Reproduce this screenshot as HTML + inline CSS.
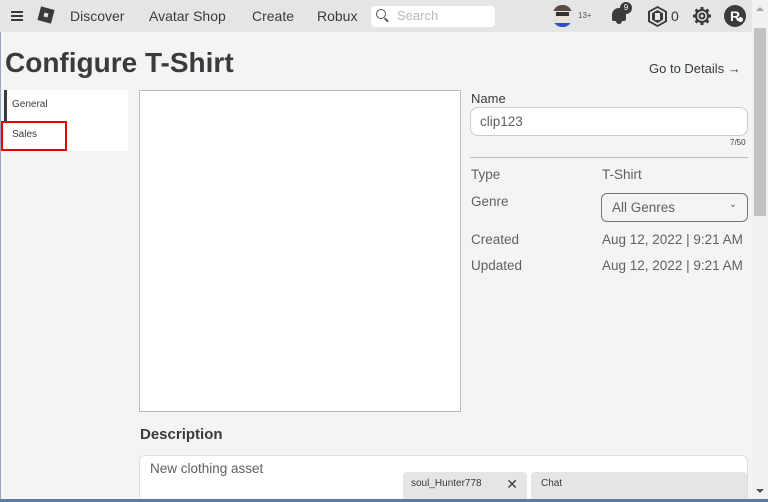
<!DOCTYPE html>
<html><head><style>
*{box-sizing:border-box;margin:0;padding:0}
body{width:768px;height:502px;overflow:hidden;background:#f2f4f5;font-family:"Liberation Sans",sans-serif;color:#393b3d;position:relative}
.abs{position:absolute}
.hdr{left:0;top:0;width:752px;height:32px;background:#e3e5e7}
.nav{top:8px;font-size:14px;color:#393b3d}
.t{font-size:13.5px;color:#606162}
</style></head><body>
<div class="abs" style="left:0;top:0;width:1px;height:502px;background:#9aa6b8"></div>
<div class="abs hdr"></div>
<div class="abs" style="left:11px;top:11px;width:12px;height:2px;background:#393b3d;box-shadow:0 4px 0 #393b3d,0 8px 0 #393b3d"></div>
<div class="abs" style="left:39px;top:8px;width:14px;height:14px;background:#393b3d;transform:rotate(15deg)"><div style="margin:5px;width:4px;height:4px;background:#e3e5e7"></div></div>
<div class="abs nav" style="left:70px">Discover</div>
<div class="abs nav" style="left:149px">Avatar Shop</div>
<div class="abs nav" style="left:252px">Create</div>
<div class="abs nav" style="left:317px">Robux</div>
<div class="abs" style="left:371px;top:6px;width:124px;height:21px;background:#fff;border-radius:4px"></div>
<div class="abs" style="left:376px;top:9px;width:10px;height:10px;border:1.5px solid #555;border-radius:50%"></div>
<div class="abs" style="left:384px;top:19px;width:5px;height:1.5px;background:#555;transform:rotate(45deg)"></div>
<div class="abs" style="left:397px;top:8px;font-size:13px;color:#b8b8b8">Search</div>
<div class="abs" style="left:553px;top:5px;width:19px;height:22px;border-radius:9px;background:#e8e0da;overflow:hidden">
 <div style="height:6px;background:#5a4a45"></div>
 <div style="margin:1px 3px;height:4px;background:#333"></div>
 <div style="position:absolute;bottom:0;left:0;width:19px;height:4px;background:#2a4dc8"></div></div>
<div class="abs" style="left:578px;top:11px;font-size:8px;color:#555">13+</div>
<div class="abs" style="left:612px;top:8px;width:14px;height:13px;background:#393b3d;border-radius:7px 7px 2px 2px"></div>
<div class="abs" style="left:616px;top:20px;width:6px;height:4px;background:#393b3d;border-radius:0 0 3px 3px"></div>
<div class="abs" style="left:620px;top:2px;width:12px;height:12px;border-radius:50%;background:#393b3d;color:#fff;font-size:8px;text-align:center;line-height:12px">9</div>
<div class="abs" style="left:648px;top:6px;width:19px;height:21px;background:#393b3d;clip-path:polygon(50% 0,100% 25%,100% 75%,50% 100%,0 75%,0 25%)"></div>
<div class="abs" style="left:650px;top:8px;width:15px;height:17px;background:#e3e5e7;clip-path:polygon(50% 0,100% 25%,100% 75%,50% 100%,0 75%,0 25%)"></div>
<div class="abs" style="left:652px;top:10px;width:11px;height:13px;background:#393b3d;clip-path:polygon(50% 0,100% 25%,100% 75%,50% 100%,0 75%,0 25%)"></div>
<div class="abs" style="left:655px;top:13px;width:5px;height:7px;background:#e3e5e7"></div>
<div class="abs" style="left:671px;top:8px;font-size:14px">0</div>
<svg class="abs" style="left:692px;top:6px" width="20" height="20" viewBox="0 0 20 20"><g fill="none" stroke="#393b3d" stroke-width="2"><circle cx="10" cy="10" r="6"/><circle cx="10" cy="10" r="2.5"/></g><g stroke="#393b3d" stroke-width="3"><path d="M10 1v3M10 16v3M1 10h3M16 10h3M3.6 3.6l2.1 2.1M14.3 14.3l2.1 2.1M3.6 16.4l2.1-2.1M14.3 5.7l2.1-2.1"/></g></svg>
<div class="abs" style="left:724px;top:5px;width:22px;height:22px;border-radius:50%;background:#393b3d;color:#fff;font-weight:bold;font-size:14px;text-align:center;line-height:22px">R</div>
<div class="abs" style="left:738px;top:17px;width:5px;height:5px;border-radius:50%;background:#fff"></div>
<div class="abs" style="left:752px;top:0;width:16px;height:502px;background:#f1f1f1"></div>
<div class="abs" style="left:756px;top:7px;width:0;height:0;border:4px solid transparent;border-bottom-color:#a3a3a3;border-top:0"></div>
<div class="abs" style="left:754px;top:28px;width:12px;height:188px;background:#c1c1c1"></div>
<div class="abs" style="left:756px;top:489px;width:0;height:0;border:4px solid transparent;border-top-color:#505050;border-bottom:0"></div>
<div class="abs" style="left:5px;top:47px;font-size:28px;font-weight:bold;color:#393b3d">Configure T-Shirt</div>
<div class="abs" style="left:649px;top:61px;font-size:13px">Go to Details →</div>
<div class="abs" style="left:4px;top:90px;width:124px;height:61px;background:#fff"></div>
<div class="abs" style="left:4px;top:90px;width:3px;height:31px;background:#393b3d"></div>
<div class="abs" style="left:12px;top:99px;font-size:10px">General</div>
<div class="abs" style="left:1px;top:121px;width:66px;height:30px;border:2px solid #e00"></div>
<div class="abs" style="left:12px;top:129px;font-size:10px">Sales</div>
<div class="abs" style="left:139px;top:90px;width:322px;height:322px;background:#fff;border:1px solid #bbb"></div>
<div class="abs" style="left:471px;top:91px;font-size:13px">Name</div>
<div class="abs" style="left:470px;top:107px;width:278px;height:29px;background:#fff;border:1px solid #ccc;border-radius:8px;padding:6px 9px;font-size:13.5px;color:#606162">clip123</div>
<div class="abs" style="left:730px;top:138px;font-size:8px">7/50</div>
<div class="abs" style="left:470px;top:157px;width:278px;height:1px;background:#bbb"></div>
<div class="abs t" style="left:471px;top:167px">Type</div>
<div class="abs t" style="left:602px;top:167px">T-Shirt</div>
<div class="abs t" style="left:471px;top:194px">Genre</div>
<div class="abs" style="left:601px;top:193px;width:147px;height:29px;border:1px solid #777;border-radius:6px;padding:6px 10px;font-size:13.5px;color:#606162">All Genres<span style="position:absolute;right:10px;top:5px;font-size:10px">⌄</span></div>
<div class="abs t" style="left:471px;top:232px">Created</div>
<div class="abs t" style="left:602px;top:232px">Aug 12, 2022 | 9:21 AM</div>
<div class="abs t" style="left:471px;top:258px">Updated</div>
<div class="abs t" style="left:602px;top:258px">Aug 12, 2022 | 9:21 AM</div>
<div class="abs" style="left:140px;top:426px;font-size:15px;font-weight:bold">Description</div>
<div class="abs" style="left:139px;top:455px;width:609px;height:47px;background:#fff;border:1px solid #ddd;border-radius:6px;padding:5px 10px;font-size:13.5px;color:#606162">New clothing asset</div>
<div class="abs" style="left:403px;top:472px;width:124px;height:30px;background:#e3e5e7;border-radius:4px 4px 0 0;font-size:10px;padding:6px 8px">soul_Hunter778<span style="position:absolute;right:9px;top:4px;font-size:14px">✕</span></div>
<div class="abs" style="left:531px;top:472px;width:216px;height:30px;background:#e3e5e7;border-radius:4px 4px 0 0;font-size:10px;padding:6px 10px">Chat</div>
<div class="abs" style="left:0;top:499px;width:768px;height:3px;background:#5b7aa8"></div>
</body></html>
